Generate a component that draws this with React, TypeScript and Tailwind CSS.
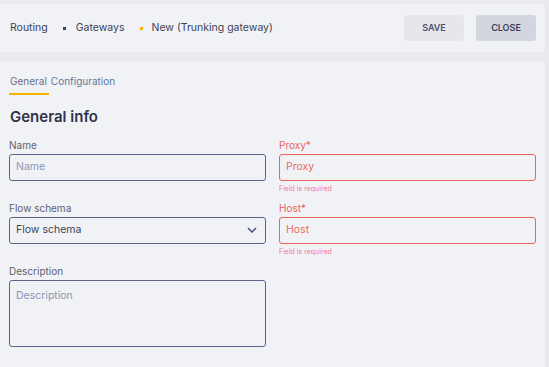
import React from 'react';

const Field: React.FC<{ label: string; placeholder: string; error?: boolean }> = ({ label, placeholder, error }) => {
    return (
        <div className="flex flex-col">
            <label className={`text-[10px] leading-[13px] mb-[2px] ${error ? 'text-[#e8645c]' : 'text-[#5d6070]'}`}>{label}</label>
            <div
                className={`h-[27px] rounded-[3px] border px-[6px] flex items-center text-[10.5px] ${
                    error ? 'border-[#e8645c] text-[#ea6a62]' : 'border-[#5b6189] text-[#8d95b5]'
                }`}
            >
                {placeholder}
            </div>
            {error ? (
                <span className="text-[7px] leading-[9px] mt-[3px] text-[#f07a95]">Field is required</span>
            ) : (
                <span className="h-[12px]" />
            )}
        </div>
    );
};

export default function App() {
    return (
        <div className="w-[549px] h-[367px] overflow-hidden bg-[#e9eaef] pt-[4px] pr-[4px]" style={{ fontFamily: 'Inter, "Noto Sans", sans-serif' }}>
            <div className="h-[48px] bg-[#f1f2f6] rounded-r-[3px] flex items-center justify-between pl-[10px] pr-[9px]">
                <div className="flex items-center text-[10.5px] text-[#3d4257]">
                    <span>Routing</span>
                    <span className="w-[3px] h-[3px] bg-[#3d4257] ml-[15px] mr-[10px]" />
                    <span>Gateways</span>
                    <span className="w-[3px] h-[3px] bg-[#f5b400] ml-[15px] mr-[9px]" />
                    <span>New (Trunking gateway)</span>
                </div>
                <div className="flex gap-[12px]">
                    <button className="w-[60px] h-[26px] rounded-[3px] bg-[#e6e7ec] text-[9px] font-semibold text-[#4b5170]">SAVE</button>
                    <button className="w-[60px] h-[26px] rounded-[3px] bg-[#d3d6df] text-[9px] font-semibold text-[#3b4058]">CLOSE</button>
                </div>
            </div>
            <div className="mt-[10px] h-[400px] bg-[#f1f2f6] rounded-tr-[3px] pl-[9px] pr-[9px] pt-[12px]">
                <div className="flex text-[10px] leading-[14px]">
                    <div className="flex flex-col">
                        <span className="px-[1px] text-[#6a6e80]">General</span>
                        <span className="mt-[5px] h-[2px] bg-[#f5b400] -mr-[1px]" />
                    </div>
                    <span className="ml-[3px] text-[#5b7a9a]">Configuration</span>
                </div>
                <h2 className="mt-[11px] ml-[1px] text-[15px] font-semibold text-[#2f3348]">General info</h2>
                <div className="mt-[10px] grid grid-cols-2 gap-x-[13px] gap-y-[9px]">
                    <Field label="Name" placeholder="Name" />
                    <Field label="Proxy*" placeholder="Proxy" error />
                    <div className="flex flex-col">
                        <label className="text-[10px] leading-[13px] mb-[2px] text-[#5d6070]">Flow schema</label>
                        <div className="h-[27px] rounded-[3px] border border-[#5b6189] pl-[6px] pr-[8px] flex items-center justify-between text-[10.5px] text-[#3d4257]">
                            <span>Flow schema</span>
                            <svg width="10" height="6" viewBox="0 0 10 6" fill="none">
                                <path d="M1 1l4 4 4-4" stroke="#4b5170" strokeWidth="1.5" />
                            </svg>
                        </div>
                    </div>
                    <Field label="Host*" placeholder="Host" error />
                    <div className="flex flex-col">
                        <label className="text-[10px] leading-[13px] mb-[2px] text-[#5d6070]">Description</label>
                        <div className="h-[67px] rounded-[3px] border border-[#5b6189] px-[6px] pt-[7px] text-[10.5px] text-[#8d95b5]">Description</div>
                    </div>
                </div>
            </div>
        </div>
    );
}
